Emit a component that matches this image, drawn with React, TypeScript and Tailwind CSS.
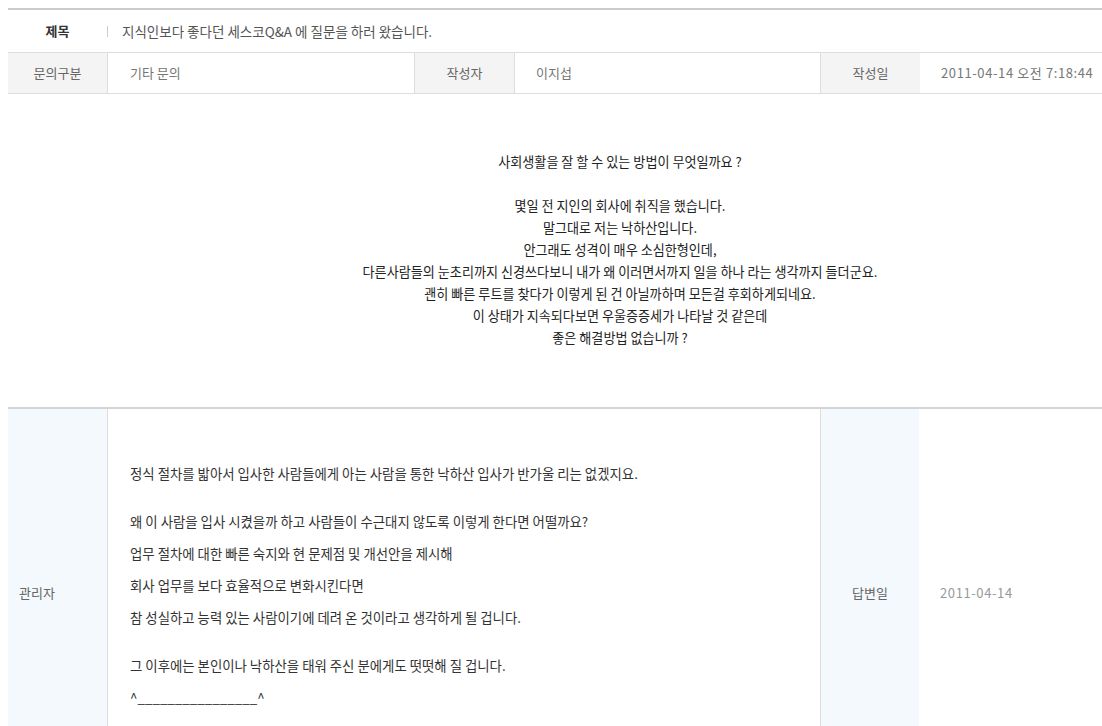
import React from "react"

const question = [
  "사회생활을 잘 할 수 있는 방법이 무엇일까요 ?",
  "",
  "몇일 전 지인의 회사에 취직을 했습니다.",
  "말그대로 저는 낙하산입니다.",
  "안그래도 성격이 매우 소심한형인데,",
  "다른사람들의 눈초리까지 신경쓰다보니 내가 왜 이러면서까지 일을 하나 라는 생각까지 들더군요.",
  "괜히 빠른 루트를 찾다가 이렇게 된 건 아닐까하며 모든걸 후회하게되네요.",
  "이 상태가 지속되다보면 우울증증세가 나타날 것 같은데",
  "좋은 해결방법 없습니까 ?",
]

const answer = [
  "정식 절차를 밟아서 입사한 사람들에게 아는 사람을 통한 낙하산 입사가 반가울 리는 없겠지요.",
  "",
  "왜 이 사람을 입사 시켰을까 하고 사람들이 수근대지 않도록 이렇게 한다면 어떨까요?",
  "업무 절차에 대한 빠른 숙지와 현 문제점 및 개선안을 제시해",
  "회사 업무를 보다 효율적으로 변화시킨다면",
  "참 성실하고 능력 있는 사람이기에 데려 온 것이라고 생각하게 될 겁니다.",
  "",
  "그 이후에는 본인이나 낙하산을 태워 주신 분에게도 떳떳해 질 겁니다.",
  "^________________^",
]

function InfoLabel({ children }: { children: React.ReactNode }) {
  return (
    <div className="w-[99px] shrink-0 bg-[#f4f4f4] flex items-center justify-center text-[#666]">
      {children}
    </div>
  )
}

export default function App() {
  return (
    <div className="w-full h-[726px] overflow-hidden bg-white">
      <div
        className="w-[1100px] ml-[8px] mt-[8px] text-[13px]"
        style={{ fontFamily: '"Noto Sans CJK KR", "Noto Sans", sans-serif' }}
      >
        {/* title */}
        <div className="h-[44px] border-t-2 border-[#cccccc] flex items-center">
          <div className="w-[99px] text-center font-bold text-[#333]">제목</div>
          <span className="h-[11px] border-l border-[#cccccc]" />
          <span className="ml-[14px] text-[13.5px] text-[#555]">지식인보다 좋다던 세스코Q&amp;A 에 질문을 하러 왔습니다.</span>
        </div>

        {/* info row */}
        <div className="h-[42px] border-y border-[#dddddd] flex">
          <InfoLabel>문의구분</InfoLabel>
          <div className="w-[308px] shrink-0 flex items-center pl-[22px] text-[#777] border-x border-[#dddddd]">기타 문의</div>
          <InfoLabel>작성자</InfoLabel>
          <div className="w-[307px] shrink-0 flex items-center pl-[21px] text-[#777] border-x border-[#dddddd]">이지섭</div>
          <InfoLabel>작성일</InfoLabel>
          <div className="flex-1 flex items-center pl-[21px] text-[#777] tracking-[0.6px]">2011-04-14 오전 7:18:44</div>
        </div>

        {/* question body */}
        <div className="pt-[57px] pb-[58px] pl-[124px] text-center text-[13.1px] leading-[22px] text-[#222]">
          {question.map((line, i) => (
            <div key={i} className="h-[22px]">{line}</div>
          ))}
        </div>

        {/* answer */}
        <div className="border-t-2 border-[#d4d4d4] flex h-[370px]">
          <div className="w-[99px] shrink-0 bg-[#f3f9fc] flex items-center pl-[11px] text-[#666]">관리자</div>
          <div className="w-[714px] shrink-0 border-x border-[#dddddd] pl-[22px] pt-[48px] text-[13.4px] text-[#333]">
            {answer.map((line, i) =>
              line === "" ? (
                <div key={i} className="h-[16px]" />
              ) : (
                <div key={i} className="h-[32px] leading-[32px]">{line}</div>
              )
            )}
          </div>
          <div className="w-[98px] shrink-0 bg-[#f3f9fc] flex items-center justify-center text-[#666]">답변일</div>
          <div className="flex-1 flex items-center pl-[21px] text-[#999] tracking-[0.6px]">2011-04-14</div>
        </div>
      </div>
    </div>
  )
}
